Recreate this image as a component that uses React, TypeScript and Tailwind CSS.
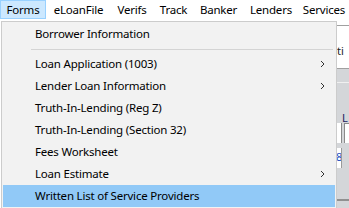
import React from "react";

const Chevron = () => (
  <svg width="5" height="8" viewBox="0 0 5 8" className="absolute right-[10px] top-[7px]">
    <path d="M1 1 L4 4 L1 7" fill="none" stroke="#333" strokeWidth="1" />
  </svg>
);

type Item = { label: string; sub?: boolean; active?: boolean };

const MenuItem = ({ label, sub, active }: Item) => (
  <div
    className={
      "relative h-[22px] flex items-center pl-[32px] text-[11.5px] tracking-[-0.2px] text-black whitespace-nowrap " +
      (active ? "bg-[#91c9f7]" : "")
    }
  >
    <span>{label}</span>
    {sub && <Chevron />}
  </div>
);

export default function App() {
  const bar: { label: string; w: string }[] = [
    { label: "Forms", w: "w-[46px]" },
    { label: "eLoanFile", w: "w-[65px]" },
    { label: "Verifs", w: "w-[42px]" },
    { label: "Track", w: "w-[41px]" },
    { label: "Banker", w: "w-[49px]" },
    { label: "Lenders", w: "w-[56px]" },
    { label: "Services", w: "w-[50px]" },
  ];
  return (
    <div className="relative w-[349px] h-[208px] overflow-hidden bg-white font-['Noto_Sans',sans-serif]">
      <div className="flex h-[20px] bg-white text-[11.5px] tracking-[-0.2px] text-black">
        {bar.map((b, i) => (
          <div
            key={b.label}
            className={
              "shrink-0 h-[19px] flex items-center justify-center whitespace-nowrap " +
              b.w +
              (i === 0 ? " bg-[#cce8ff] border border-[#99d1ff]" : "")
            }
          >
            {b.label}
          </div>
        ))}
      </div>
      {/* underlying form visible at right */}
      <div className="flex justify-end">
        <div className="w-[13px] h-[188px] flex flex-col bg-[#d4d6d9]">
          <div className="h-[5px] bg-white" />
          <div className="h-[1px] bg-[#a0a0a0]" />
          <div className="h-[42px] bg-white flex flex-col">
            <div className="h-[19px]" />
            <div className="pl-[1px] text-[11px] leading-[12px] text-[#222]">ti</div>
          </div>
          <div className="h-[1px] bg-[#a0a0a0]" />
          <div className="h-[13px]" />
          <div className="h-[1px] bg-[#f0f0f0]" />
          <div className="h-[29px]" />
          <div className="h-[11px] pl-[6px] text-[11px] leading-[11px] text-[#1a1a60]">L</div>
          <div className="h-[20px] flex">
            <div className="w-[6px] bg-white border-r border-[#8a8a8a]" />
            <div className="w-[2px]" />
            <div className="flex-1 bg-white border-l border-t border-[#8a8a8a]" />
          </div>
          <div className="h-[5px]" />
          <div className="h-[20px] flex">
            <div className="w-[6px] bg-white border-r border-[#9a9a9a] text-[11px] leading-[18px] text-[#2050c0] overflow-hidden">8</div>
          </div>
          <div className="h-[31px]" />
          <div className="h-[2px] bg-[#909090]" />
        </div>
      </div>

      {/* dropdown menu */}
      <div className="absolute left-[1px] top-[21px] w-[336px] bg-[#f2f2f2] border border-[#cccccc] px-[1px] pt-[1px] pb-[2px]">
        <MenuItem label="Borrower Information" />
        <div className="h-[8px] flex items-center pl-[28px] pr-[2px]">
          <div className="h-[1px] w-full bg-[#d4d4d4]" />
        </div>
        <MenuItem label="Loan Application (1003)" sub />
        <MenuItem label="Lender Loan Information" sub />
        <MenuItem label="Truth-In-Lending (Reg Z)" />
        <MenuItem label="Truth-In-Lending (Section 32)" />
        <MenuItem label="Fees Worksheet" />
        <MenuItem label="Loan Estimate" sub />
        <MenuItem label="Written List of Service Providers" active />
      </div>
    </div>
  );
}
